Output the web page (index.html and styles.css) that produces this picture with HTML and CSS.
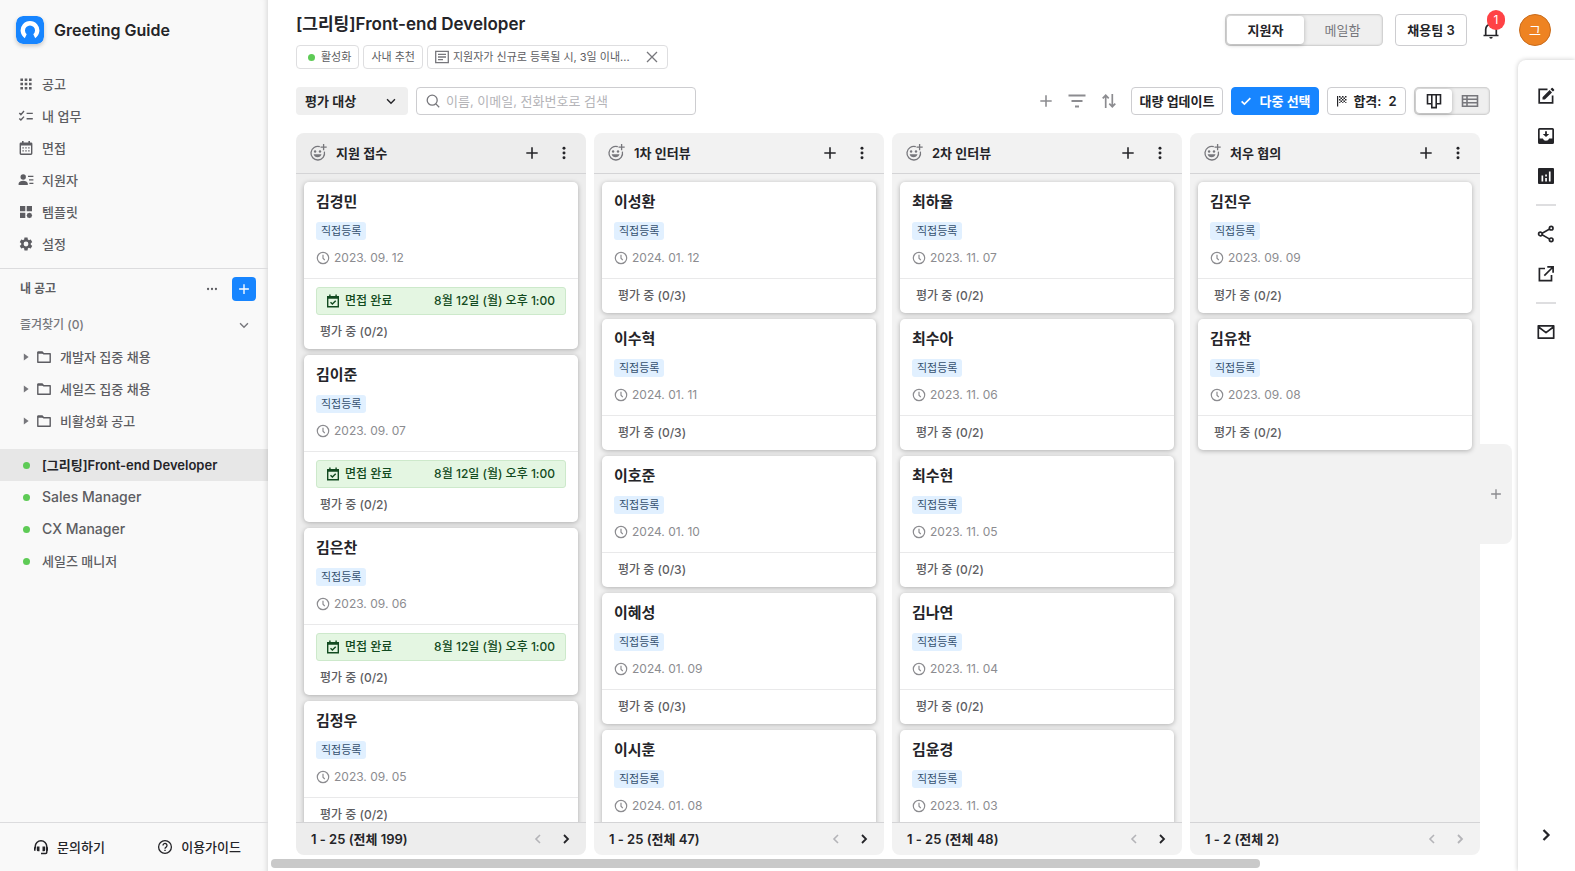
FILE: index.html
```html
<!DOCTYPE html>
<html lang="ko">
<head>
<meta charset="utf-8">
<meta name="viewport" content="width=device-width, initial-scale=1">
<title>[그리팅]Front-end Developer</title>
<link rel="stylesheet" href="styles.css">
</head>
<body>
<svg class="sprite" aria-hidden="true">
  <symbol id="i-grid" viewBox="0 0 16 16"><path d="M2.400 2.400h2.600v2.600H2.400zM6.700 2.400h2.600v2.600H6.700zM11 2.400h2.600v2.600H11zM2.400 6.700h2.600v2.600H2.400zM6.700 6.700h2.600v2.600H6.700zM11 6.700h2.600v2.600H11zM2.400 11h2.600v2.600H2.400zM6.700 11h2.600v2.600H6.700zM11 11h2.600v2.600H11z"/></symbol>
  <symbol id="i-check-list" viewBox="0 0 16 16"><path d="M1.300 5l1.600 1.600L6 3M1.300 10.400L2.900 12 6 8.600M8.600 5.400h6.200M8.600 10.800h6.200" fill="none" stroke="currentColor" stroke-width="1.400"/></symbol>
  <symbol id="i-calendar" viewBox="0 0 16 16"><path d="M4 1h1.600v1.400h4.800V1H12v1.400h1A1.400 1.400 0 0 1 14.400 3.800v9.800A1.400 1.400 0 0 1 13 15H3a1.400 1.400 0 0 1-1.400-1.400V3.800A1.400 1.400 0 0 1 3 2.400h1zM3 5.400v8.200h10V5.400zM4.400 7.200h1.400v1.400H4.400zM7.300 7.200h1.400v1.400H7.300zM10.200 7.200h1.400v1.400h-1.400zM4.400 10.200h1.400v1.400H4.400zM7.300 10.200h1.400v1.400H7.300zM10.200 10.200h1.400v1.400h-1.400z" fill-rule="evenodd"/></symbol>
  <symbol id="i-person" viewBox="0 0 16 16"><circle cx="5.200" cy="5" r="2.700"/><path d="M.6 13v-1.400C.6 9.700 3 8.700 5.200 8.700s4.600 1 4.600 2.900V13zM10 3.800h5.400v1.300H10zM11 7.200h4.400v1.300H11zM11.400 10.700h4v1.300h-4z"/></symbol>
  <symbol id="i-template" viewBox="0 0 16 16"><path d="M2 2h5.300v5.300H2zM8.700 2H14v5.300H8.700zM2 8.700h5.300V14H2z"/><circle cx="11.400" cy="11.400" r="2.300"/><path d="M11.400 8.600l.6 1h1.400l.1 1.200.9.600-.9.700-.1 1.300H12l-.6.900-.6-.900H9.400l-.1-1.300-.9-.7.900-.6.100-1.200h1.400z"/></symbol>
  <symbol id="i-gear" viewBox="0 0 24 24"><path d="M19.140 12.940c.04-.3.060-.61.060-.94 0-.32-.02-.64-.07-.94l2.030-1.580c.18-.14.230-.41.120-.61l-1.920-3.320c-.12-.22-.37-.29-.59-.22l-2.390.96c-.5-.38-1.030-.7-1.620-.94l-.36-2.540c-.04-.24-.24-.41-.48-.41h-3.840c-.24 0-.43.170-.47.410l-.36 2.540c-.59.240-1.130.570-1.620.940l-2.390-.96c-.22-.08-.47 0-.59.220L2.740 8.870c-.12.210-.08.470.120.610l2.030 1.580c-.05.300-.09.630-.09.940s.02.640.070.940l-2.030 1.580c-.18.140-.23.410-.12.610l1.920 3.320c.12.220.37.290.59.220l2.390-.96c.5.380 1.030.7 1.620.940l.36 2.540c.05.240.24.410.48.410h3.840c.24 0 .44-.17.470-.41l.36-2.540c.59-.24 1.130-.56 1.620-.94l2.390.96c.22.080.47 0 .59-.22l1.920-3.320c.12-.22.070-.47-.12-.61zM12 15.600a3.600 3.600 0 1 1 0-7.200 3.600 3.600 0 0 1 0 7.200z"/></symbol>
  <symbol id="i-more" viewBox="0 0 16 16"><circle cx="3.500" cy="8" r="1.300"/><circle cx="8" cy="8" r="1.300"/><circle cx="12.500" cy="8" r="1.300"/></symbol>
  <symbol id="i-kebab" viewBox="0 0 16 16"><circle cx="8" cy="2.600" r="1.700"/><circle cx="8" cy="8" r="1.700"/><circle cx="8" cy="13.400" r="1.700"/></symbol>
  <symbol id="i-plus" viewBox="0 0 16 16"><path d="M8 1.500v13M1.500 8h13" fill="none" stroke="currentColor" stroke-width="1.800"/></symbol>
  <symbol id="i-down" viewBox="0 0 16 16"><path d="M3.500 6L8 10.500 12.500 6" fill="none" stroke="currentColor" stroke-width="1.600"/></symbol>
  <symbol id="i-left" viewBox="0 0 16 16"><path d="M10 4L6 8l4 4" fill="none" stroke="currentColor" stroke-width="1.600"/></symbol>
  <symbol id="i-right" viewBox="0 0 16 16"><path d="M6 4l4 4-4 4" fill="none" stroke="currentColor" stroke-width="1.800"/></symbol>
  <symbol id="i-caret" viewBox="0 0 16 16"><path d="M5.500 4l5.500 4-5.500 4z"/></symbol>
  <symbol id="i-folder" viewBox="0 0 16 16"><path d="M1.800 3.200h4.500l1.400 1.500h6.500v8.600H1.800z" fill="none" stroke="currentColor" stroke-width="1.400" stroke-linejoin="round"/><path d="M1.800 2.600h4.700l1.200 2.200H1.800z"/></symbol>
  <symbol id="i-headset" viewBox="0 0 16 16"><path d="M2.200 9.500V7.600a5.800 5.800 0 0 1 11.600 0v5.600q0 1.200-1.200 1.200H8" fill="none" stroke="currentColor" stroke-width="1.500"/><path d="M1 8.200h1.600v3.600H1zM3.800 7.600h2.700v4.600H5q-1.200 0-1.200-1.200zM9.500 7.600h2.700V11q0 1.200-1.200 1.200H9.500zM13.400 8.200H15v3.600h-1.600z"/></symbol>
  <symbol id="i-help" viewBox="0 0 16 16"><circle cx="8" cy="8" r="6.400" fill="none" stroke="currentColor" stroke-width="1.300"/><path d="M6 6.500a2 2 0 1 1 3.100 1.600c-.8.500-1.100.8-1.100 1.600" fill="none" stroke="currentColor" stroke-width="1.300"/><path d="M7.300 10.700h1.400v1.400H7.300z"/></symbol>
  <symbol id="i-note" viewBox="1 1 14 14"><path d="M1.700 2.300h12.600v11.400H1.700zM4 5.400h8M4 8h8M4 10.600h5" fill="none" stroke="currentColor" stroke-width="1.300"/></symbol>
  <symbol id="i-close" viewBox="0 0 16 16"><path d="M3 3l10 10M13 3L3 13" fill="none" stroke="currentColor" stroke-width="1.300"/></symbol>
  <symbol id="i-search" viewBox="0 0 16 16"><circle cx="7.200" cy="7.200" r="5" fill="none" stroke="currentColor" stroke-width="1.300"/><path d="M10.900 10.900l3.300 3.300" stroke="currentColor" stroke-width="1.300"/></symbol>
  <symbol id="i-filter" viewBox="0 0 20 20"><path d="M1.500 4.500h17M4.500 10h11M8 15.500h4" fill="none" stroke="currentColor" stroke-width="1.900"/></symbol>
  <symbol id="i-sort" viewBox="0 0 16 16"><path d="M4.700 15V2.500M1.700 5.300l3-3 3 3M11.300 1v12.500M8.300 10.700l3 3 3-3" fill="none" stroke="currentColor" stroke-width="1.700"/></symbol>
  <symbol id="i-check" viewBox="0 0 16 16"><path d="M3 8.400l3.200 3.200L13 4.800" fill="none" stroke="currentColor" stroke-width="1.900"/></symbol>
  <symbol id="i-flag" viewBox="0 0 12 12"><path d="M1 1h1.200v10.500H1zM3 1h1.500v1.500H3zM6 1h1.500v1.500H6zM9 1h1.500v1.500H9zM4.500 2.500H6V4H4.500zM7.500 2.500H9V4H7.500zM3 4h1.500v1.500H3zM6 4h1.500v1.500H6zM9 4h1.500v1.500H9zM4.500 5.500H6V7H4.500zM7.500 5.500H9V7H7.500zM3 7h1.500v.8H3zM6 7h1.500v.8H6zM9 7h1.500v.8H9z"/></symbol>
  <symbol id="i-board" viewBox="0 0 16 16"><path d="M1.500 1.800h4.300v9H1.500zM5.800 1.800h4.400v12.800H5.800zM10.200 1.800h4.300v9h-4.300z" fill="none" stroke="currentColor" stroke-width="1.600"/></symbol>
  <symbol id="i-table" viewBox="0 0 18 16"><path d="M1.500 2.700h15v10.600h-15zM1.500 6.200h15M1.500 9.800h15M6 2.700v10.600" fill="none" stroke="currentColor" stroke-width="1.600"/></symbol>
  <symbol id="i-bell" viewBox="0 0 20 20"><path d="M2.500 15.500h15M4.700 15V9.400a5.300 5.300 0 0 1 10.600 0V15" fill="none" stroke="currentColor" stroke-width="1.700"/><path d="M8.300 17h3.400a1.700 1.700 0 0 1-3.400 0z"/></symbol>
  <symbol id="i-smile" viewBox="0 0 18 18"><path d="M10.800 2.700a6.800 6.800 0 1 0 4.600 5" fill="none" stroke="currentColor" stroke-width="1.300"/><path d="M14.600 0v6.200M11.500 3.100h6.200" stroke="currentColor" stroke-width="1.300"/><circle cx="6.100" cy="7.500" r="1.200"/><circle cx="11" cy="7.500" r="1.200"/><path d="M4.600 10.300h7.900a4.100 4.100 0 0 1-7.900 0z"/></symbol>
  <symbol id="i-clock" viewBox="0 0 14 14"><circle cx="7" cy="7" r="5.700" fill="none" stroke="currentColor" stroke-width="1.200"/><path d="M7 3.800V7.200L8.800 9.200" fill="none" stroke="currentColor" stroke-width="1.200"/></symbol>
  <symbol id="i-cal-check" viewBox="0 0 14 14"><path d="M1.700 2.700h10.600v10H1.700z" fill="none" stroke="currentColor" stroke-width="1.400"/><path d="M1 2h12v2.700H1zM3.200.4h1.400V3H3.200zM9.400.4h1.400V3H9.400z"/><path d="M4.500 8.200l1.900 1.900 3.300-3.400" fill="none" stroke="currentColor" stroke-width="1.400"/></symbol>
  <symbol id="i-edit" viewBox="0 0 18 18"><path d="M10.500 2.400H2.200v13.400h13.400V8.500" fill="none" stroke="currentColor" stroke-width="1.700"/><path d="M5.500 10.200l7.100-7.100 2.400 2.400-7.100 7.100H5.500zM13.500 2.200l1.200-1.200q.5-.4 1 0l1.400 1.400q.4.500 0 1l-1.200 1.200z"/></symbol>
  <symbol id="i-inbox" viewBox="0 0 18 18"><path d="M2.500 1h13A1.500 1.500 0 0 1 17 2.500v13a1.500 1.500 0 0 1-1.500 1.500h-13A1.500 1.500 0 0 1 1 15.500v-13A1.500 1.500 0 0 1 2.500 1zM2.700 2.700v8.700h3.200a3.200 3.200 0 0 0 6.200 0h3.200V2.700z" fill-rule="evenodd"/><path d="M8.100 4.200h1.800v2.700h2.300L9 10.100 5.800 6.900h2.300z"/></symbol>
  <symbol id="i-chart" viewBox="0 0 18 18"><path d="M2 1h14a1 1 0 0 1 1 1v14a1 1 0 0 1-1 1H2a1 1 0 0 1-1-1V2a1 1 0 0 1 1-1zM4.500 8.500v6h1.700v-6zM8.200 11v3.500h1.700V11zM8.200 7.600v1.800h1.700V7.600zM11.900 4.500v10h1.700v-10z" fill-rule="evenodd"/></symbol>
  <symbol id="i-share" viewBox="0 0 18 18"><path d="M13.500 3.500L3.800 9l9.700 5.600" fill="none" stroke="currentColor" stroke-width="1.600"/><g fill="#fff" stroke="currentColor" stroke-width="1.700"><circle cx="14.200" cy="3.200" r="1.800"/><circle cx="3.400" cy="9" r="1.800"/><circle cx="14.200" cy="14.800" r="1.800"/></g></symbol>
  <symbol id="i-external" viewBox="0 0 18 18"><path d="M8 3.500H2.400v12.100h12.100V10M10.300 1.900h5.800v5.800M16 2L7.300 10.700" fill="none" stroke="currentColor" stroke-width="1.700"/></symbol>
  <symbol id="i-mail" viewBox="0 0 18 18"><path d="M1.300 2.800h15.400v12.400H1.300zM1.600 4l7.400 5.700L16.400 4" fill="none" stroke="currentColor" stroke-width="1.700" stroke-linejoin="round"/></symbol>
</svg>

<div class="app">
  <aside class="sidebar">
    <a class="brand" href="#">
      <svg class="logo" viewBox="0 0 28 28" aria-hidden="true"><rect width="28" height="28" rx="7" fill="#1785ff"/><path d="M8.800 22.200A9.400 9.400 0 1 1 19.200 22.200L17.300 18.300A5 5 0 1 0 10.700 18.300Z" fill="#fff"/></svg>
      Greeting Guide
    </a>
    <nav class="nav">
      <a href="#"><svg class="s16"><use href="#i-grid"/></svg>공고</a>
      <a href="#"><svg class="s16"><use href="#i-check-list"/></svg>내 업무</a>
      <a href="#"><svg class="s16"><use href="#i-calendar"/></svg>면접</a>
      <a href="#"><svg class="s16"><use href="#i-person"/></svg>지원자</a>
      <a href="#"><svg class="s16"><use href="#i-template"/></svg>템플릿</a>
      <a href="#"><svg class="s16"><use href="#i-gear"/></svg>설정</a>
    </nav>
    <div class="openings-head">
      <h2>내 공고</h2>
      <button class="icon-btn" aria-label="더보기"><svg class="s14"><use href="#i-more"/></svg></button>
      <button class="add-btn" aria-label="공고 추가"><svg class="s12"><use href="#i-plus"/></svg></button>
    </div>
    <button class="favorites">즐겨찾기 (0)<svg class="s14"><use href="#i-down"/></svg></button>
    <nav class="folders">
      <a href="#"><svg class="s14"><use href="#i-caret"/></svg><svg class="s16"><use href="#i-folder"/></svg>개발자 집중 채용</a>
      <a href="#"><svg class="s14"><use href="#i-caret"/></svg><svg class="s16"><use href="#i-folder"/></svg>세일즈 집중 채용</a>
      <a href="#"><svg class="s14"><use href="#i-caret"/></svg><svg class="s16"><use href="#i-folder"/></svg>비활성화 공고</a>
    </nav>
    <nav class="openings">
      <a class="active" href="#"><i class="dot"></i>[그리팅]Front-end Developer</a>
      <a href="#"><i class="dot"></i>Sales Manager</a>
      <a href="#"><i class="dot"></i>CX Manager</a>
      <a class="ko" href="#"><i class="dot"></i>세일즈 매니저</a>
    </nav>
    <div class="side-foot">
      <a href="#"><svg class="s16"><use href="#i-headset"/></svg>문의하기</a>
      <a href="#"><svg class="s16"><use href="#i-help"/></svg>이용가이드</a>
    </div>
  </aside>

  <main class="main">
    <div class="top-actions">
      <div class="segment tabs">
        <button class="on">지원자</button><button>메일함</button>
      </div>
      <button class="btn team">채용팀 3</button>
      <button class="bell" aria-label="알림"><svg class="s20"><use href="#i-bell"/></svg><span class="badge">1</span></button>
      <button class="avatar">그</button>
    </div>

    <header class="page-head">
      <h1>[그리팅]Front-end Developer</h1>
      <div class="chips">
        <span class="chip"><i class="dot"></i>활성화</span>
        <span class="chip">사내 추천</span>
        <span class="chip memo"><svg class="s14"><use href="#i-note"/></svg><span>지원자가 신규로 등록될 시, 3일 이내...</span><button class="icon-btn" aria-label="닫기"><svg class="s16"><use href="#i-close"/></svg></button></span>
      </div>
    </header>

    <div class="toolbar">
      <div class="select-box">
        <select aria-label="평가 대상"><option>평가 대상</option></select>
        <svg class="s14"><use href="#i-down"/></svg>
      </div>
      <label class="search"><svg class="s16"><use href="#i-search"/></svg><input type="text" aria-label="검색" placeholder="이름, 이메일, 전화번호로 검색"></label>
      <div class="tools">
        <button class="icon-btn" aria-label="추가"><svg class="s14"><use href="#i-plus"/></svg></button>
        <button class="icon-btn" aria-label="필터"><svg class="s20"><use href="#i-filter"/></svg></button>
        <button class="icon-btn" aria-label="정렬"><svg class="s16"><use href="#i-sort"/></svg></button>
      </div>
      <button class="btn bulk">대량 업데이트</button>
      <button class="btn primary"><svg class="s14"><use href="#i-check"/></svg>다중 선택</button>
      <button class="btn pass"><svg class="s12"><use href="#i-flag"/></svg>합격:<b>2</b></button>
      <div class="segment views">
        <button class="on" aria-label="보드 보기"><svg class="s16"><use href="#i-board"/></svg></button><button aria-label="표 보기"><svg class="s18"><use href="#i-table"/></svg></button>
      </div>
    </div>

    <div class="board">
      <section class="column first">
        <header><svg class="s18"><use href="#i-smile"/></svg><h2>지원 접수</h2><button aria-label="추가"><svg class="s14"><use href="#i-plus"/></svg></button><button aria-label="메뉴"><svg class="s14"><use href="#i-kebab"/></svg></button></header>
        <div class="cards">
          <article class="card"><div class="info"><h3>김경민</h3><span class="tag">직접등록</span><p class="date"><svg class="s14"><use href="#i-clock"/></svg>2023. 09. 12</p></div><div class="interview"><svg class="s14"><use href="#i-cal-check"/></svg><span>면접 완료</span><time>8월 12일 (월) 오후 1:00</time></div><p class="status">평가 중 (0/2)</p></article>
          <article class="card"><div class="info"><h3>김이준</h3><span class="tag">직접등록</span><p class="date"><svg class="s14"><use href="#i-clock"/></svg>2023. 09. 07</p></div><div class="interview"><svg class="s14"><use href="#i-cal-check"/></svg><span>면접 완료</span><time>8월 12일 (월) 오후 1:00</time></div><p class="status">평가 중 (0/2)</p></article>
          <article class="card"><div class="info"><h3>김은찬</h3><span class="tag">직접등록</span><p class="date"><svg class="s14"><use href="#i-clock"/></svg>2023. 09. 06</p></div><div class="interview"><svg class="s14"><use href="#i-cal-check"/></svg><span>면접 완료</span><time>8월 12일 (월) 오후 1:00</time></div><p class="status">평가 중 (0/2)</p></article>
          <article class="card"><div class="info"><h3>김정우</h3><span class="tag">직접등록</span><p class="date"><svg class="s14"><use href="#i-clock"/></svg>2023. 09. 05</p></div><p class="status">평가 중 (0/2)</p></article>
        </div>
        <footer><span>1 - 25 (전체 199)</span><button disabled aria-label="이전"><svg class="s16"><use href="#i-left"/></svg></button><button aria-label="다음"><svg class="s16"><use href="#i-right"/></svg></button></footer>
      </section>

      <section class="column">
        <header><svg class="s18"><use href="#i-smile"/></svg><h2>1차 인터뷰</h2><button aria-label="추가"><svg class="s14"><use href="#i-plus"/></svg></button><button aria-label="메뉴"><svg class="s14"><use href="#i-kebab"/></svg></button></header>
        <div class="cards">
          <article class="card"><div class="info"><h3>이성환</h3><span class="tag">직접등록</span><p class="date"><svg class="s14"><use href="#i-clock"/></svg>2024. 01. 12</p></div><p class="status">평가 중 (0/3)</p></article>
          <article class="card"><div class="info"><h3>이수혁</h3><span class="tag">직접등록</span><p class="date"><svg class="s14"><use href="#i-clock"/></svg>2024. 01. 11</p></div><p class="status">평가 중 (0/3)</p></article>
          <article class="card"><div class="info"><h3>이호준</h3><span class="tag">직접등록</span><p class="date"><svg class="s14"><use href="#i-clock"/></svg>2024. 01. 10</p></div><p class="status">평가 중 (0/3)</p></article>
          <article class="card"><div class="info"><h3>이혜성</h3><span class="tag">직접등록</span><p class="date"><svg class="s14"><use href="#i-clock"/></svg>2024. 01. 09</p></div><p class="status">평가 중 (0/3)</p></article>
          <article class="card"><div class="info"><h3>이시훈</h3><span class="tag">직접등록</span><p class="date"><svg class="s14"><use href="#i-clock"/></svg>2024. 01. 08</p></div></article>
        </div>
        <footer><span>1 - 25 (전체 47)</span><button disabled aria-label="이전"><svg class="s16"><use href="#i-left"/></svg></button><button aria-label="다음"><svg class="s16"><use href="#i-right"/></svg></button></footer>
      </section>

      <section class="column">
        <header><svg class="s18"><use href="#i-smile"/></svg><h2>2차 인터뷰</h2><button aria-label="추가"><svg class="s14"><use href="#i-plus"/></svg></button><button aria-label="메뉴"><svg class="s14"><use href="#i-kebab"/></svg></button></header>
        <div class="cards">
          <article class="card"><div class="info"><h3>최하율</h3><span class="tag">직접등록</span><p class="date"><svg class="s14"><use href="#i-clock"/></svg>2023. 11. 07</p></div><p class="status">평가 중 (0/2)</p></article>
          <article class="card"><div class="info"><h3>최수아</h3><span class="tag">직접등록</span><p class="date"><svg class="s14"><use href="#i-clock"/></svg>2023. 11. 06</p></div><p class="status">평가 중 (0/2)</p></article>
          <article class="card"><div class="info"><h3>최수현</h3><span class="tag">직접등록</span><p class="date"><svg class="s14"><use href="#i-clock"/></svg>2023. 11. 05</p></div><p class="status">평가 중 (0/2)</p></article>
          <article class="card"><div class="info"><h3>김나연</h3><span class="tag">직접등록</span><p class="date"><svg class="s14"><use href="#i-clock"/></svg>2023. 11. 04</p></div><p class="status">평가 중 (0/2)</p></article>
          <article class="card"><div class="info"><h3>김윤경</h3><span class="tag">직접등록</span><p class="date"><svg class="s14"><use href="#i-clock"/></svg>2023. 11. 03</p></div></article>
        </div>
        <footer><span>1 - 25 (전체 48)</span><button disabled aria-label="이전"><svg class="s16"><use href="#i-left"/></svg></button><button aria-label="다음"><svg class="s16"><use href="#i-right"/></svg></button></footer>
      </section>

      <section class="column">
        <header><svg class="s18"><use href="#i-smile"/></svg><h2>처우 협의</h2><button aria-label="추가"><svg class="s14"><use href="#i-plus"/></svg></button><button aria-label="메뉴"><svg class="s14"><use href="#i-kebab"/></svg></button></header>
        <div class="cards">
          <article class="card"><div class="info"><h3>김진우</h3><span class="tag">직접등록</span><p class="date"><svg class="s14"><use href="#i-clock"/></svg>2023. 09. 09</p></div><p class="status">평가 중 (0/2)</p></article>
          <article class="card"><div class="info"><h3>김유찬</h3><span class="tag">직접등록</span><p class="date"><svg class="s14"><use href="#i-clock"/></svg>2023. 09. 08</p></div><p class="status">평가 중 (0/2)</p></article>
        </div>
        <footer><span>1 - 2 (전체 2)</span><button disabled aria-label="이전"><svg class="s16"><use href="#i-left"/></svg></button><button disabled aria-label="다음"><svg class="s16"><use href="#i-right"/></svg></button></footer>
      </section>
      <button class="add-column" aria-label="단계 추가"><svg class="s12"><use href="#i-plus"/></svg></button>
    </div>
    <div class="scrollbar"><div class="thumb"></div></div>

    <aside class="rail">
      <button aria-label="편집"><svg class="s18"><use href="#i-edit"/></svg></button>
      <button aria-label="가져오기"><svg class="s18"><use href="#i-inbox"/></svg></button>
      <button aria-label="통계"><svg class="s18"><use href="#i-chart"/></svg></button>
      <hr>
      <button aria-label="공유"><svg class="s18"><use href="#i-share"/></svg></button>
      <button aria-label="새 창"><svg class="s18"><use href="#i-external"/></svg></button>
      <hr>
      <button aria-label="메일"><svg class="s18"><use href="#i-mail"/></svg></button>
      <button class="collapse" aria-label="펼치기"><svg class="s20"><use href="#i-right"/></svg></button>
    </aside>
  </main>
</div>
</body>
</html>
```

FILE: styles.css
```css
* { box-sizing: border-box; }
body, h1, h2, h3, p { margin: 0; }
body {
  font-family: Inter, "Noto Sans CJK KR", sans-serif;
  font-size: 13px;
  line-height: 20px;
  color: #242428;
  background: #fff;
}
a { color: inherit; text-decoration: none; }
button, input, select { font: inherit; color: inherit; }
button {
  display: flex;
  align-items: center;
  justify-content: center;
  padding: 0;
  border: 0;
  background: none;
  white-space: nowrap;
}
svg { flex: none; fill: currentColor; }
.sprite { position: absolute; width: 0; height: 0; }
.s12 { width: 12px; height: 12px; }
.s14 { width: 14px; height: 14px; }
.s16 { width: 16px; height: 16px; }
.s18 { width: 18px; height: 18px; }
.s20 { width: 20px; height: 20px; }

.app { display: flex; height: 100vh; overflow: hidden; }

/* Sidebar */
.sidebar {
  flex: none;
  display: flex;
  flex-direction: column;
  width: 268px;
  background: #f9f9f9;
  box-shadow: inset -6px 0 6px -6px rgba(0, 0, 0, .18);
  color: #5d5d62;
  font-weight: 500;
}
.brand {
  display: flex;
  align-items: center;
  gap: 10px;
  padding: 16px 16px 24px;
  font-size: 16px;
  line-height: 26px;
  font-weight: 600;
  color: #242428;
}
.logo { width: 28px; height: 28px; border-radius: 7px; box-shadow: 0 2px 4px rgba(0, 0, 0, .2); }
.nav { padding-bottom: 8px; border-bottom: 1px solid #dcdcde; }
.nav a { display: flex; align-items: center; gap: 8px; height: 32px; padding: 0 18px; }
.openings-head { display: flex; align-items: center; gap: 13px; padding: 8px 12px 8px 20px; }
.openings-head h2 { flex: 1; font-size: 12px; font-weight: 600; }
.add-btn { width: 24px; height: 24px; border-radius: 4px; background: #1785ff; color: #fff; }
.favorites { justify-content: space-between; height: 32px; padding: 0 17px 0 20px; font-size: 12px; color: #77777c; }
.folders a { display: flex; align-items: center; gap: 8px; height: 32px; padding: 0 19px; }
.folders .s14 { margin-right: -5px; color: #77777c; }
.openings { padding-top: 12px; }
.openings a { display: flex; align-items: center; gap: 12px; height: 32px; padding: 0 23px; font-size: 14px; white-space: nowrap; }
.openings a.ko { font-size: 13px; }
.openings .active { background: rgba(0, 0, 0, .07); color: #242428; font-weight: 600; font-size: 13px; }
.dot { flex: none; width: 7px; height: 7px; border-radius: 50%; background: #5ecb56; }
.side-foot {
  display: flex;
  align-items: center;
  justify-content: space-between;
  height: 49px;
  margin-top: auto;
  padding: 0 27px 0 33px;
  border-top: 1px solid #dcdcde;
  color: #242428;
}
.side-foot a { display: flex; align-items: center; gap: 8px; }

/* Page */
.main {
  flex: 1;
  min-width: 0;
  display: grid;
  grid-template-columns: minmax(0, 1fr) 57px;
  grid-template-rows: 60px 27px auto minmax(0, 1fr) 16px;
}
.top-actions {
  grid-area: 1 / 1 / 2 / 3;
  justify-self: end;
  display: flex;
  align-items: center;
  height: 32px;
  margin: 14px 24px 0 0;
}
.page-head { grid-area: 1 / 1 / 3 / 2; justify-self: start; padding: 12px 0 0 28px; }
.page-head h1 { padding-bottom: 9px; font-size: 17px; line-height: 24px; font-weight: 600; }
.chips { display: flex; gap: 4px; }
.chip {
  display: flex;
  align-items: center;
  gap: 6px;
  height: 24px;
  padding: 0 7px;
  border: 1px solid #dedee0;
  border-radius: 4px;
  font-size: 11px;
  color: #5d5d62;
}
.chip .dot { margin-left: 4px; }
.chip .icon-btn { margin-left: 10px; }
.memo { gap: 4px; }
.memo svg { color: #77777c; }
.segment {
  display: flex;
  padding: 2px;
  border-radius: 5px;
  background: #efefef;
  box-shadow: inset 0 0 2px 1px rgba(0, 0, 0, .16);
}
.segment button { border-radius: 4px; color: #77777c; }
.segment .on { background: #fff; color: #242428; font-weight: 600; box-shadow: 0 1px 4px rgba(0, 0, 0, .25); }
.tabs { height: 32px; margin-right: 12px; }
.tabs button { width: 77px; }
.btn {
  height: 28px;
  padding: 0 7px;
  border: 1px solid #cdcdd0;
  border-radius: 4px;
  background: #fff;
  font-weight: 600;
}
.team { width: 72px; height: 32px; }
.bell { position: relative; margin-left: 14px; }
.badge {
  position: absolute;
  top: -10px;
  right: -4px;
  min-width: 18px;
  padding: 0 5px;
  border-radius: 10px;
  background: #ff4245;
  color: #fff;
  font-size: 12px;
}
.avatar {
  width: 32px;
  height: 32px;
  margin-left: 18px;
  border: 1px solid #c96c1c;
  border-radius: 50%;
  background: #ee8322;
  color: #fff;
}

.toolbar { grid-area: 3 / 1; display: flex; align-items: center; gap: 8px; padding: 0 28px; }
.select-box { position: relative; width: 112px; }
.select-box select {
  appearance: none;
  width: 100%;
  height: 28px;
  padding: 0 9px;
  border: 0;
  border-radius: 4px;
  background: #efefef;
  font-weight: 600;
}
.select-box svg { position: absolute; top: 7px; right: 10px; pointer-events: none; }
.search {
  display: flex;
  align-items: center;
  gap: 5px;
  flex: 0 1 280px;
  min-width: 0;
  height: 28px;
  padding: 0 8px;
  border: 1px solid #cdcdd0;
  border-radius: 4px;
  color: #77777c;
}
.search input { flex: 1; min-width: 0; padding: 0; border: 0; outline: 0; background: none; }
.search input::placeholder { color: #b4b4b8; opacity: 1; }
.tools { display: flex; gap: 14px; margin: 0 6px 0 auto; color: #8c8c90; }
.bulk { min-width: 92px; }
.primary { gap: 6px; min-width: 88px; border-color: #1785ff; background: #1785ff; color: #fff; }
.pass { gap: 5px; min-width: 79px; }
.pass b { margin-left: 2px; font-weight: 600; }
.views { height: 28px; }
.views button { width: 36px; }

/* Board */
.board { grid-area: 4 / 1; display: flex; padding: 18px 0 0 28px; overflow: hidden; }
.column {
  flex: none;
  display: flex;
  flex-direction: column;
  width: 290px;
  margin-right: 8px;
  border-radius: 8px;
  background: #f2f2f2;
}
.first { background: #ededed; }
.column header { display: flex; align-items: center; height: 41px; padding: 0 15px 0 13px; border-bottom: 1px solid #d4d4d6; }
.column header > svg { color: #77777c; }
.column h2 { flex: 1; padding-left: 9px; font-size: 13px; font-weight: 600; }
.column header button + button { margin-left: 18px; }
.cards { flex: 1; min-height: 0; display: flex; flex-direction: column; gap: 6px; padding: 8px 8px 0; overflow: hidden; }
.card { flex: none; border-radius: 5px; background: #fff; box-shadow: 0 1px 5px rgba(0, 0, 0, .28); }
.info { padding: 8px 12px 10px; border-bottom: 1px solid #e9e9ea; }
.card h3 { font-size: 15px; line-height: 23px; font-weight: 600; }
.tag {
  display: block;
  width: max-content;
  margin: 9px 0 8px;
  padding: 0 5px;
  border-radius: 3px;
  background: #e1f0ff;
  color: #35506e;
  font-size: 11px;
  line-height: 18px;
}
.date { display: flex; align-items: center; gap: 4px; font-size: 12px; color: #8c8c90; }
.interview {
  display: flex;
  align-items: center;
  gap: 5px;
  height: 28px;
  margin: 8px 12px 0;
  padding: 0 10px 0 9px;
  border: 1px solid #cde9cb;
  border-radius: 3px;
  background: #e4f6e2;
  color: #124a20;
  font-size: 12px;
  font-weight: 500;
}
.interview time { margin-left: auto; }
.status { padding: 0 16px; font-size: 12px; line-height: 34px; font-weight: 500; color: #5d5d62; }
.column footer { display: flex; align-items: center; gap: 12px; height: 33px; padding: 0 12px 0 15px; border-top: 1px solid #d4d4d6; font-weight: 600; }
.column footer span { flex: 1; }
.column footer button:disabled { color: #b4b4b8; }
.add-column {
  flex: none;
  align-self: center;
  width: 32px;
  height: 100px;
  margin-left: -8px;
  border-radius: 0 8px 8px 0;
  background: #f2f2f2;
  color: #8c8c90;
}
.scrollbar { grid-area: 5 / 1 / 6 / 3; padding: 4px 3px 3px; }
.thumb { width: 76%; height: 9px; border-radius: 4px; background: #c9c9c9; }

/* Right rail */
.rail {
  grid-area: 2 / 2 / 6 / 3;
  z-index: 1;
  display: flex;
  flex-direction: column;
  align-items: center;
  gap: 22px;
  padding: 27px 1px 26px 0;
  border-radius: 8px 0 0 0;
  background: #fff;
  box-shadow: 0 0 5px rgba(0, 0, 0, .22);
}
.rail hr { width: 20px; height: 2px; margin: -3px 0; border: 0; background: #dedee0; }
.collapse { margin-top: auto; }
```
